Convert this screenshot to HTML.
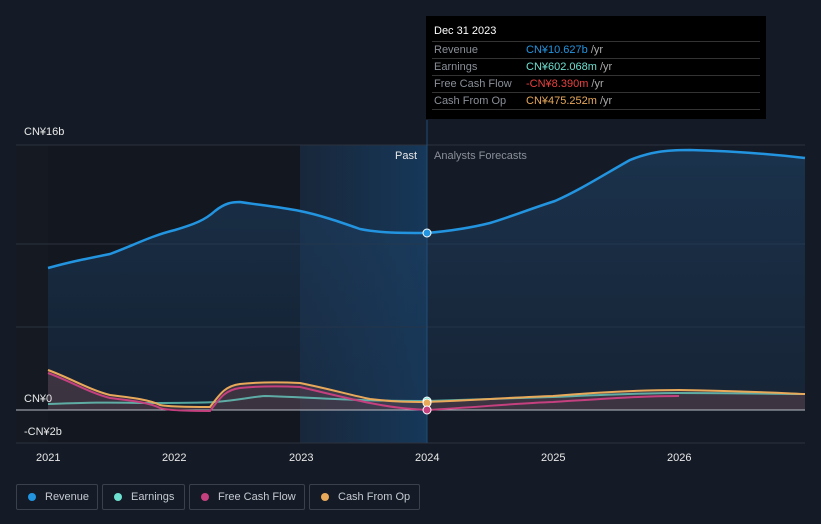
<!DOCTYPE html>
<html><head><meta charset="utf-8"><style>
body{margin:0;background:#151b26;width:821px;height:524px;overflow:hidden;font-family:"Liberation Sans","Noto Sans CJK SC",sans-serif;}
.tt{position:absolute;left:426px;top:16px;width:340px;height:103px;background:#000;color:#fff;font-size:11px;}
.tt .h{position:absolute;left:8px;top:9px;font-size:11px;}
.row{position:absolute;left:6px;width:328px;height:17px;border-top:1px solid #333;line-height:17px}
.row span{position:absolute;left:2px;color:#8a8f98}
.row b{position:absolute;left:94px;font-weight:normal}
.row i{font-style:normal;color:#aaa}
.lg{position:absolute;top:484px;height:26px;border:1px solid #3a404c;border-radius:2px;color:#c5c9d0;font-size:11px;line-height:24px;box-sizing:border-box;padding-left:28px;white-space:nowrap}
.lg:before{content:"";position:absolute;left:11px;top:8px;width:8px;height:8px;border-radius:50%;background:var(--c)}
.lbl{position:absolute;color:#e8e8e8;font-size:11px}
</style></head><body>
<svg width="821" height="524" style="position:absolute;left:0;top:0">
<defs><linearGradient id="hl" x1="0" x2="1"><stop offset="0" stop-color="#1a3350" stop-opacity="0.5"/><stop offset="1" stop-color="#16385a"/></linearGradient>
<linearGradient id="rf" x1="0" y1="0" x2="0" y2="1"><stop offset="0" stop-color="#1e4266" stop-opacity="0.8"/><stop offset="1" stop-color="#1a3350" stop-opacity="0.5"/></linearGradient></defs>
<rect x="16" y="145" width="32" height="298" fill="#141922"/>
<rect x="48" y="145" width="252" height="298" fill="#121720"/>
<rect x="300" y="145" width="127" height="298" fill="url(#hl)"/>
<g stroke="#2c323d" stroke-width="1"><line x1="16" y1="145" x2="805" y2="145"/><line x1="16" y1="244" x2="805" y2="244"/><line x1="16" y1="327" x2="805" y2="327"/><line x1="16" y1="443" x2="805" y2="443"/></g>
<path d="M48,268 C70,262 80,260 110,254 C130,247 150,236 175,230 C195,224 205,220 215,211 C225,203 232,202 240,202 C260,205 280,207 300,211 C320,215 340,222 360,229 C380,233 400,233 427,233 C450,231 470,228 490,223 C510,217 530,209 555,201 C580,190 605,174 630,160 C650,152 665,150 690,150 C730,151 770,154 805,158 L805,410 L48,410 Z" fill="url(#rf)" opacity="0.75"/>
<path d="M48,370 C70,378 90,390 110,395 C135,398 150,400 160,405 C170,407 200,407 210,407 C220,394 225,386 240,384 C260,382 280,382 300,383 C330,389 350,395 370,399 C395,402 410,402 427,402 C480,400 520,397 553,396 C600,392 640,390 679,390 C740,391 780,393 805,394 L805,410 L48,410Z" fill="#6b4a50" opacity="0.45"/>
<line x1="16" y1="410" x2="805" y2="410" stroke="#b8bcc4" stroke-width="1"/>
<line x1="427" y1="120" x2="427" y2="443" stroke="#1f4e78" stroke-width="1"/>
<path d="M48,404 C80,403 100,402 140,403 C170,403 200,403 215,402 C240,400 250,397 265,396 C300,397 330,399 360,400 C390,401 410,401 427,401 C480,399 520,398 553,397 C600,395 640,393 679,393 C730,393 780,394 805,394" fill="none" stroke="#6ee0d0" stroke-width="2" opacity="0.7"/>
<path d="M48,373 C70,381 90,393 110,398 C135,401 150,403 160,408 C168,411 200,411 210,411 C220,398 225,390 240,388 C260,386 280,386 300,387 C330,394 350,399 370,403 C395,408 410,409 427,410 C480,407 520,403 553,402 C600,399 640,396 679,396" fill="none" stroke="#c4407f" stroke-width="2"/>
<path d="M48,370 C70,378 90,390 110,395 C135,398 150,400 160,405 C170,407 200,407 210,407 C220,394 225,386 240,384 C260,382 280,382 300,383 C330,389 350,395 370,399 C395,402 410,402 427,402 C480,400 520,397 553,396 C600,392 640,390 679,390 C740,391 780,393 805,394" fill="none" stroke="#e8a95a" stroke-width="2"/>
<path d="M48,268 C70,262 80,260 110,254 C130,247 150,236 175,230 C195,224 205,220 215,211 C225,203 232,202 240,202 C260,205 280,207 300,211 C320,215 340,222 360,229 C380,233 400,233 427,233 C450,231 470,228 490,223 C510,217 530,209 555,201 C580,190 605,174 630,160 C650,152 665,150 690,150 C730,151 770,154 805,158" fill="none" stroke="#2394df" stroke-width="2.5"/>
<circle cx="427" cy="233" r="4" fill="#2394df" stroke="#fff" stroke-width="1"/>
<circle cx="427" cy="401" r="4" fill="#6ee0d0" stroke="#fff" stroke-width="1"/>
<circle cx="427" cy="403" r="4" fill="#e8a95a" stroke="#fff" stroke-width="1"/>
<circle cx="427" cy="410" r="4" fill="#c4407f" stroke="#fff" stroke-width="1"/>
</svg>
<div class="lbl" style="left:24px;top:126px">CN¥16b</div>
<div class="lbl" style="left:24px;top:393px">CN¥0</div>
<div class="lbl" style="left:24px;top:426px">-CN¥2b</div>
<div class="lbl" style="left:395px;top:150px">Past</div>
<div class="lbl" style="left:434px;top:150px;color:#8a8f98">Analysts Forecasts</div>
<div class="lbl" style="left:36px;top:452px">2021</div>
<div class="lbl" style="left:162px;top:452px">2022</div>
<div class="lbl" style="left:289px;top:452px">2023</div>
<div class="lbl" style="left:415px;top:452px">2024</div>
<div class="lbl" style="left:541px;top:452px">2025</div>
<div class="lbl" style="left:667px;top:452px">2026</div>
<div class="tt"><div class="h">Dec 31 2023</div>
<div class="row" style="top:25px"><span>Revenue</span><b style="color:#2394df">CN¥10.627b <i>/yr</i></b></div>
<div class="row" style="top:42px"><span>Earnings</span><b style="color:#6ee0d0">CN¥602.068m <i>/yr</i></b></div>
<div class="row" style="top:59px"><span>Free Cash Flow</span><b style="color:#e8413f">-CN¥8.390m <i>/yr</i></b></div>
<div class="row" style="top:76px"><span>Cash From Op</span><b style="color:#e8a95a">CN¥475.252m <i>/yr</i></b></div>
<div class="row" style="top:93px;height:0"></div>
</div>
<div class="lg" style="left:16px;width:82px;--c:#2394df">Revenue</div>
<div class="lg" style="left:102px;width:83px;--c:#6ee0d0">Earnings</div>
<div class="lg" style="left:189px;width:116px;--c:#c4407f">Free Cash Flow</div>
<div class="lg" style="left:309px;width:111px;--c:#e8a95a">Cash From Op</div>
</body></html>
